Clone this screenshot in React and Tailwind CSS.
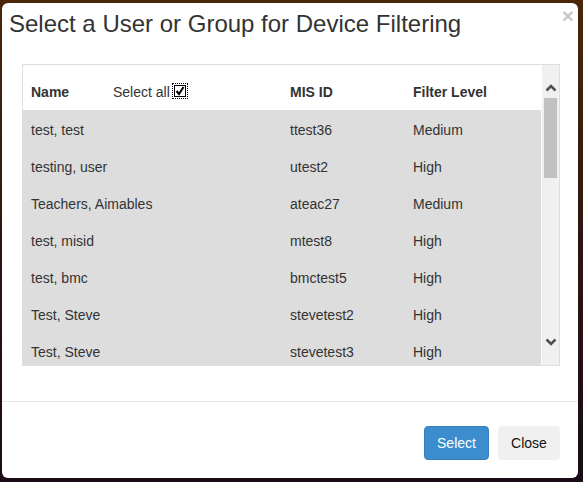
import React from "react";

const rows = [
  ["test, test", "ttest36", "Medium"],
  ["testing, user", "utest2", "High"],
  ["Teachers, Aimables", "ateac27", "Medium"],
  ["test, misid", "mtest8", "High"],
  ["test, bmc", "bmctest5", "High"],
  ["Test, Steve", "stevetest2", "High"],
  ["Test, Steve", "stevetest3", "High"],
];

const Chevron = ({ down }) => (
  <svg width="12" height="8" viewBox="0 0 12 8" className="block">
    <path
      d={down ? "M1.5 1.5 L6 6 L10.5 1.5" : "M1.5 6.5 L6 2 L10.5 6.5"}
      fill="none"
      stroke="#505050"
      strokeWidth="2.6"
    />
  </svg>
);

const App = () => {
  return (
    <div
      className="w-[583px] h-[482px] pt-[3px] pl-[2px] pr-[5px] pb-[4px] bg-gradient-to-b from-[#4a2708] via-[#2b1610] to-[#1a0b16] overflow-hidden"
      style={{ fontFamily: '"Liberation Sans", Arial, sans-serif' }}
    >
      <div className="relative h-full bg-white rounded-[6px] flex flex-col text-[#333]">
        <button className="absolute right-[4px] top-[2px] text-[21px] font-bold leading-none text-[#c8c8c8]">
          ×
        </button>

        <div className="pl-[7px] pt-[6px] h-[61px]">
          <h1 className="text-[24px] leading-[30px]">
            Select a User or Group for Device Filtering
          </h1>
        </div>

        <div className="pl-[20px] pr-[18px] h-[337px]">
          <div className="flex h-[302px] border border-[#dedede] overflow-hidden">
            <div className="flex-1 overflow-hidden">
              <div className="grid grid-cols-[82px_177px_123px_1fr] items-start pl-[8px] h-[45px] pt-[17px] text-[14px] leading-[20px]">
                <span className="font-bold">Name</span>
                <span className="flex items-center h-[20px]">
                  Select all
                  <span className="ml-[3px] inline-flex w-[14px] h-[14px] -mt-[3px] outline outline-1 outline-dotted outline-black">
                    <span className="m-[1px] flex-1 border border-black bg-white flex items-center justify-center">
                      <svg width="10" height="10" viewBox="0 0 10 10">
                        <path d="M1.5 5 L4 8 L8.5 1" fill="none" stroke="#000" strokeWidth="2" />
                      </svg>
                    </span>
                  </span>
                </span>
                <span className="font-bold">MIS ID</span>
                <span className="font-bold">Filter Level</span>
              </div>
              <div className="bg-[#dddddd] h-[256px]">
                {rows.map((r, i) => (
                  <div
                    key={i}
                    className="grid grid-cols-[82px_177px_123px_1fr] pl-[8px] h-[37px] items-center text-[14px] leading-[20px] pt-[2px]"
                  >
                    <span className="col-span-2">{r[0]}</span>
                    <span>{r[1]}</span>
                    <span>{r[2]}</span>
                  </div>
                ))}
              </div>
            </div>
            <div className="w-[18px] bg-[#f0f0f0] border-l border-white flex flex-col">
              <div className="h-[33px] shrink-0 flex justify-center pt-[19px]">
                <Chevron />
              </div>
              <div className="mx-[2px] h-[80px] shrink-0 bg-[#c1c1c1]" />
              <div className="flex-1" />
              <div className="h-[45px] shrink-0 flex items-center justify-center pb-[2px]">
                <Chevron down />
              </div>
            </div>
          </div>
        </div>

        <div className="border-t border-[#e5e5e5] flex justify-end gap-[9px] pr-[18px] pt-[24px]">
          <button className="h-[34px] w-[65px] rounded-[4px] bg-[#3c8dcd] border border-[#3580bd] text-white text-[14px]">
            Select
          </button>
          <button className="h-[34px] w-[62px] rounded-[4px] bg-[#f0f0f0] text-[#111] text-[14px]">
            Close
          </button>
        </div>
      </div>
    </div>
  );
};

export default App;
